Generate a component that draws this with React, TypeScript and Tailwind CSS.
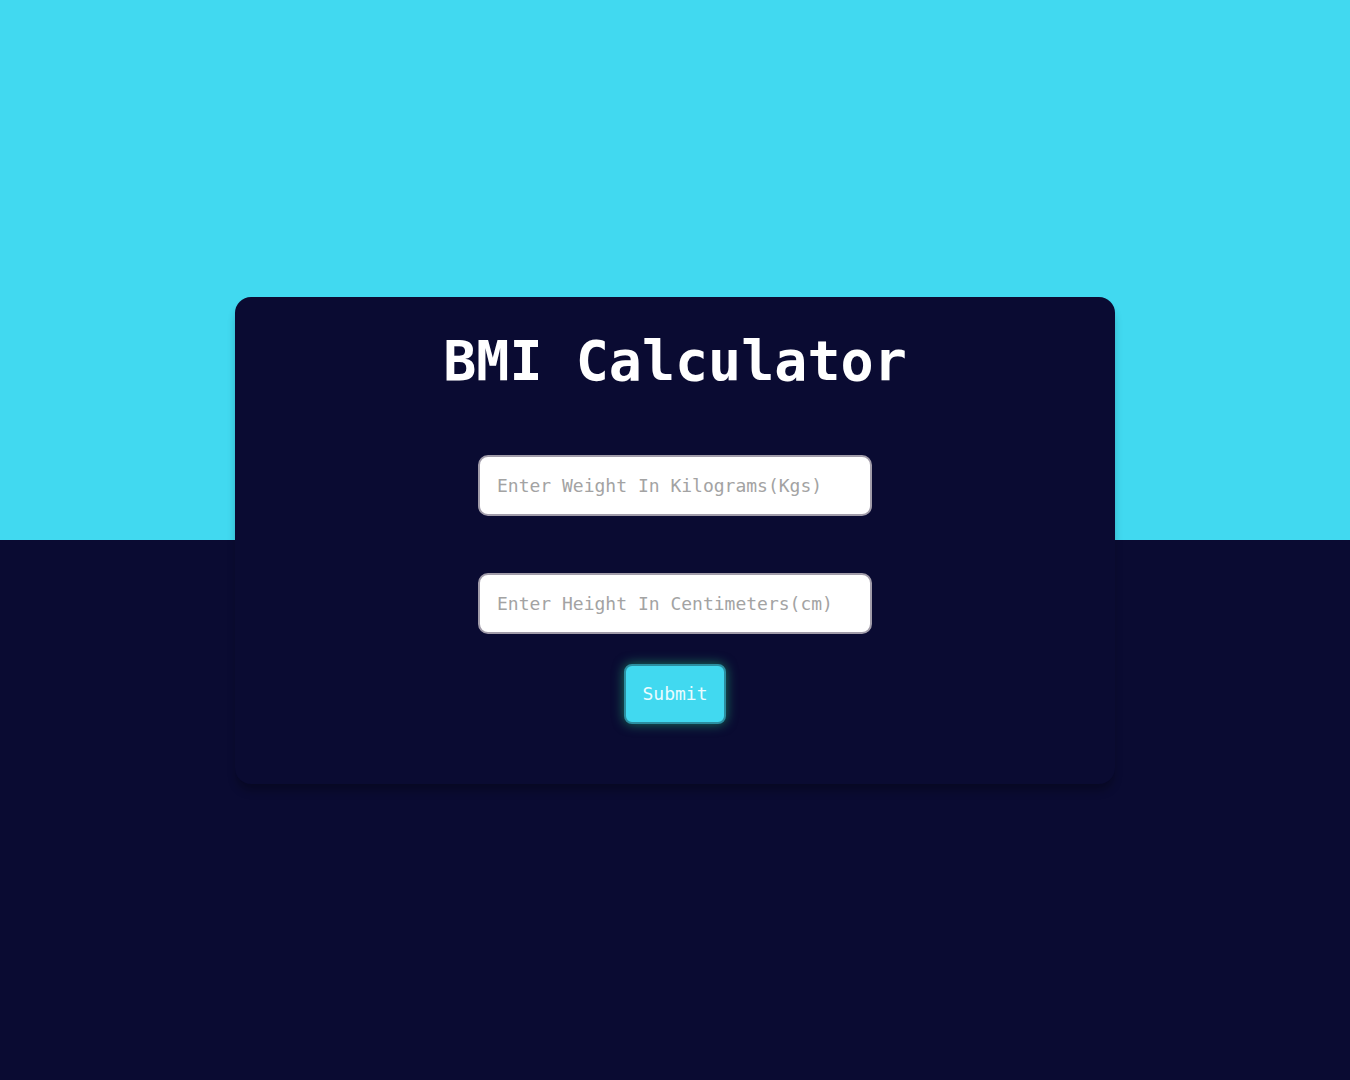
import React from 'react';

const App: React.FC = () => {
  return (
    <div className="min-h-screen flex items-center justify-center bg-[linear-gradient(to_bottom,#41d9f0_50%,#0a0b32_50%)] font-['DejaVu_Sans_Mono','Liberation_Mono',monospace]">
      <div className="w-[880px] bg-[#0a0b32] rounded-2xl shadow-[0_8px_10px_-2px_rgba(0,0,0,0.3)] pt-[37px] pb-[60px] flex flex-col items-center">
        <h1 className="text-[55px] leading-none font-bold text-white">BMI Calculator</h1>

        <input
          type="text"
          placeholder="Enter Weight In Kilograms(Kgs)"
          className="mt-[66px] w-[394px] h-[61px] rounded-[10px] border-2 border-[#a19ca9] bg-white px-[17px] text-[18px] text-gray-700 placeholder:text-[#a3a3a3] outline-none"
        />

        <input
          type="text"
          placeholder="Enter Height In Centimeters(cm)"
          className="mt-[57px] w-[394px] h-[61px] rounded-[10px] border-2 border-[#a19ca9] bg-white px-[17px] text-[18px] text-gray-700 placeholder:text-[#a3a3a3] outline-none"
        />

        <button className="mt-[30px] w-[102px] h-[60px] rounded-[8px] border-2 border-[#2b8ea0] bg-[#41d9f0] text-[18px] text-[#eafcff] shadow-[0_0_12px_rgba(40,210,130,0.55)]">
          Submit
        </button>
      </div>
    </div>
  );
};

export default App;
